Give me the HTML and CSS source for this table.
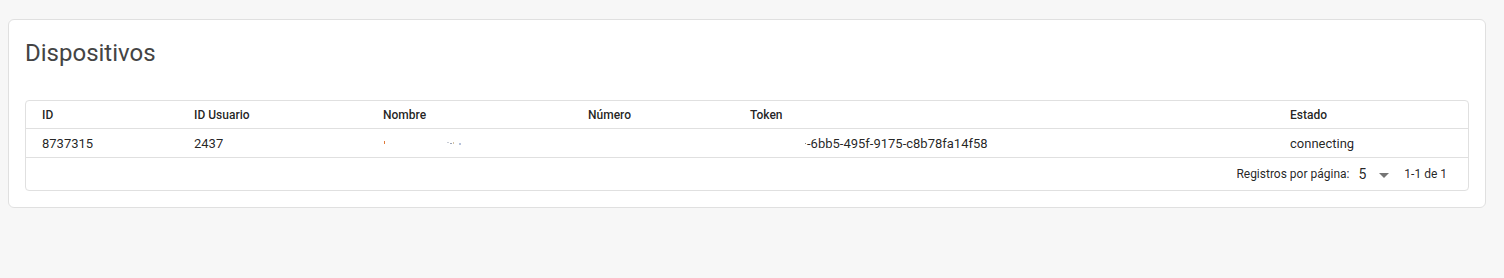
FILE: index.html
```html
<!DOCTYPE html>
<html lang="es">
<head>
<meta charset="utf-8">
<title>Dispositivos</title>
<link rel="stylesheet" href="styles.css">
</head>
<body>
<div class="card">
  <h1 class="title">Dispositivos</h1>
  <div class="table">
    <div class="row head">
      <div class="cell">ID</div>
      <div class="cell">ID Usuario</div>
      <div class="cell">Nombre</div>
      <div class="cell">Número</div>
      <div class="cell">Token</div>
      <div class="cell">Estado</div>
    </div>
    <div class="row body">
      <div class="cell">8737315</div>
      <div class="cell">2437</div>
      <div class="cell"><svg class="specks" width="90" height="10" viewBox="0 0 90 10"><rect x="1" y="3" width="1" height="3" fill="#e07a3a"/><rect x="64" y="4" width="2" height="1" fill="#c9cdd6"/><rect x="67" y="5" width="2" height="1" fill="#9aa4b8"/><rect x="70" y="4" width="1" height="2" fill="#d5c4a8"/><rect x="76" y="5" width="2" height="2" fill="#b8c4dc"/></svg></div>
      <div class="cell"></div>
      <div class="cell"><span class="speck"></span><span class="token">-6bb5-495f-9175-c8b78fa14f58</span></div>
      <div class="cell">connecting</div>
    </div>
    <div class="footer">
      <span class="label">Registros por página:</span>
      <span class="select">5</span>
      <svg class="arrow" width="24" height="24" viewBox="0 0 24 24"><path d="M7 10l5 5 5-5z" fill="rgba(0,0,0,0.54)"/></svg>
      <span class="range">1-1 de 1</span>
    </div>
  </div>
</div>
</body>
</html>
```
FILE: styles.css
```css
html, body {
  background: #f7f7f7;
}
body {
  margin: 0;
  padding: 19px 18px 0 8px;
  font-family: Roboto, "Liberation Sans", Arial, sans-serif;
  color: rgba(0, 0, 0, 0.87);
}
.card {
  background: #fff;
  border: 1px solid #e0e0e0;
  border-radius: 6px;
  padding: 17px 16px 16px 16px;
}
.title {
  margin: 0 0 31px 0;
  font-size: 24px;
  line-height: 32px;
  font-weight: 400;
  color: #444;
}
.table {
  border: 1px solid #e0e0e0;
  border-radius: 4px;
}
.row {
  display: grid;
  grid-template-columns: 152px 189px 205px 162px 540px 1fr;
  border-bottom: 1px solid #e0e0e0;
  align-items: center;
}
.row.head {
  height: 27px;
  font-size: 12px;
  font-weight: 500;
}
.row.body {
  height: 28px;
  font-size: 13px;
}
.cell {
  padding-left: 16px;
  white-space: nowrap;
}
.specks {
  display: block;
}
.speck {
  display: inline-block;
  width: 1px;
  height: 1px;
  margin-left: 55px;
  margin-right: 1px;
  vertical-align: 4px;
  background: #8a8a8a;
}
.footer {
  height: 32px;
  display: flex;
  align-items: center;
  justify-content: flex-end;
  padding-right: 21px;
  font-size: 12px;
}
.label {
  margin-right: 9px;
}
.select {
  font-size: 14px;
}
.arrow {
  margin-left: 6px;
  margin-right: 8px;
  margin-top: 1px;
}
```
